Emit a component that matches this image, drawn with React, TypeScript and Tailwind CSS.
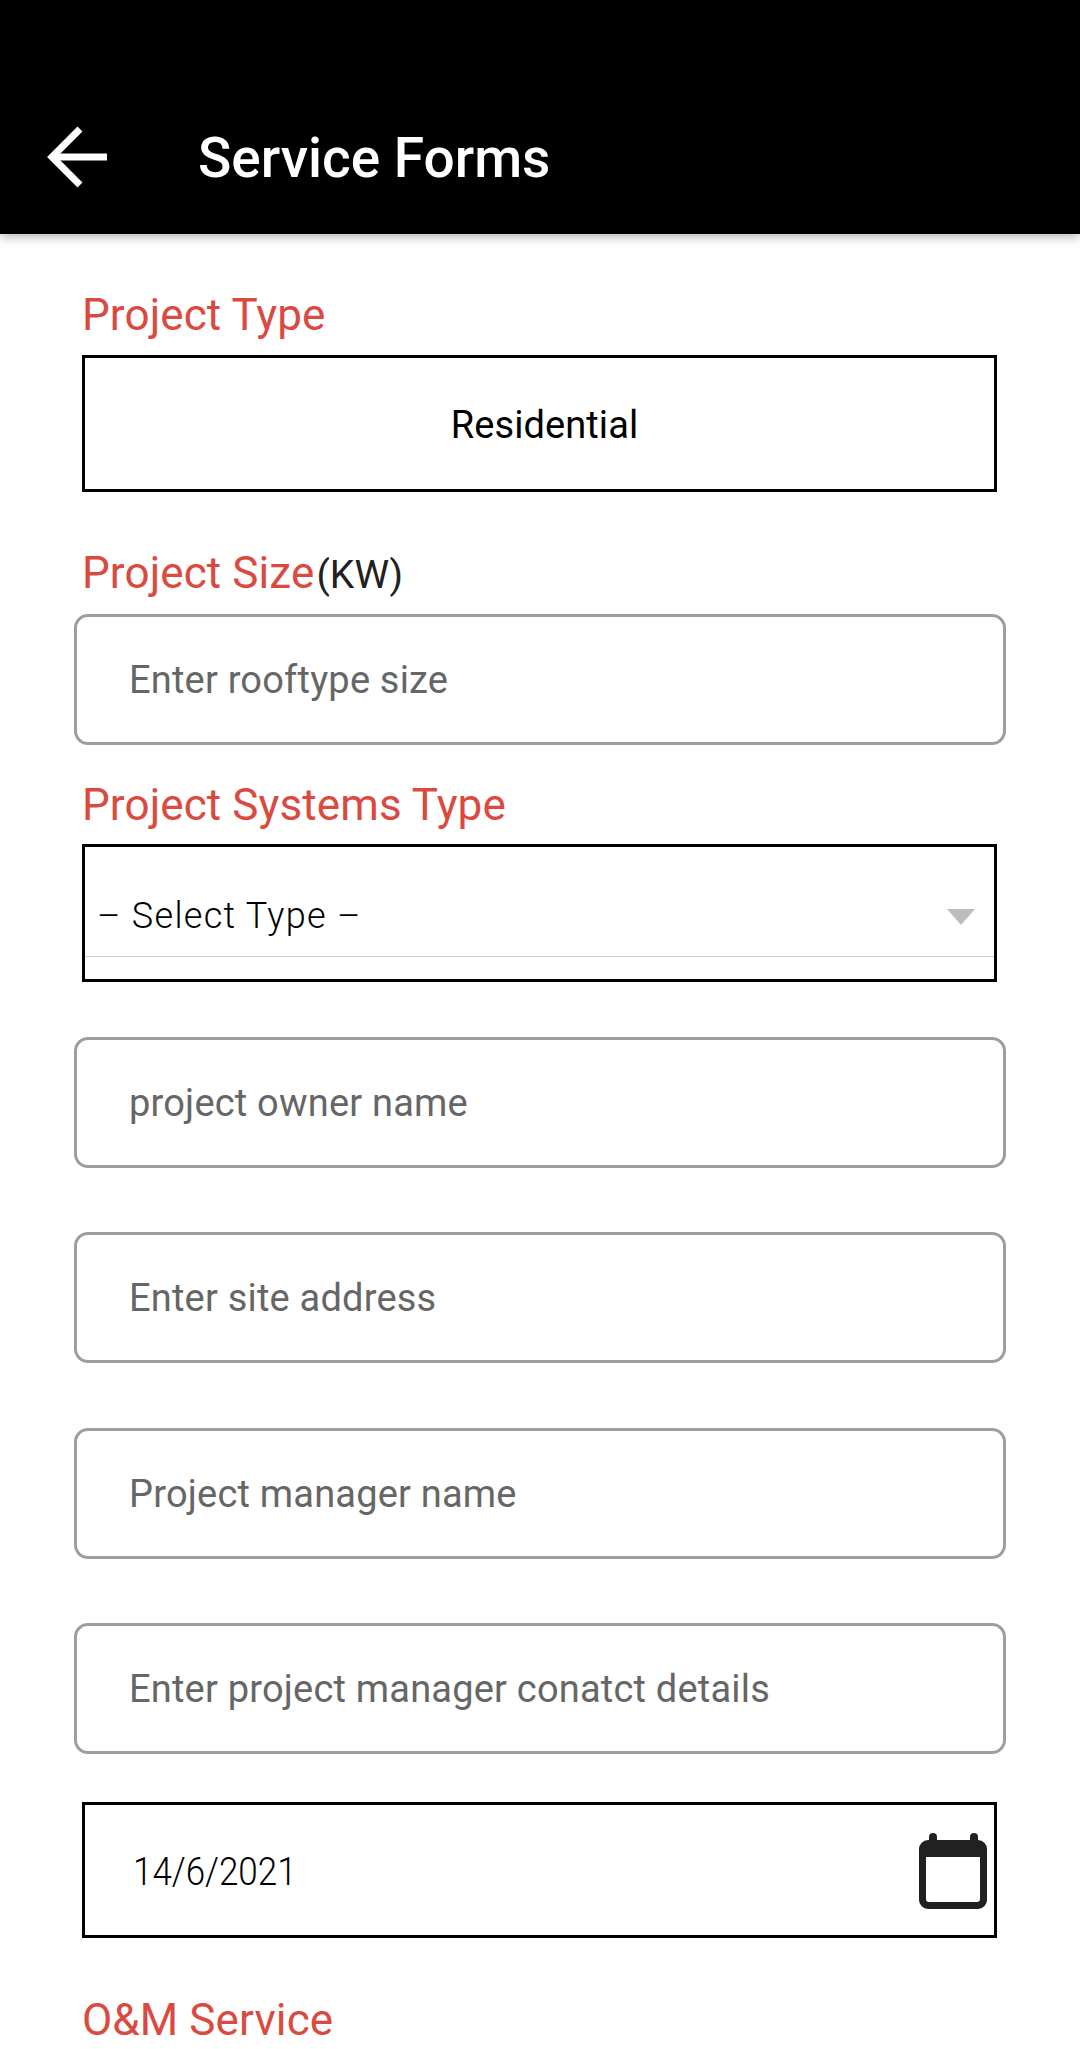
function BackArrow() {
  return (
    <svg width="62" height="62" viewBox="0 0 62 62" fill="none" stroke="#fff" strokeWidth="7">
      <path d="M60 31H6" />
      <path d="M33 3L5 31l28 28" />
    </svg>
  );
}

function CalendarIcon() {
  return (
    <svg width="68" height="76" viewBox="0 0 68 76" fill="#212121" className="translate-y-[1px]">
      <rect x="10" y="0" width="8" height="14" rx="4" />
      <rect x="51" y="0" width="8" height="14" rx="4" />
      <path
        fillRule="evenodd"
        d="M9 7h50a9 9 0 0 1 9 9v51a9 9 0 0 1-9 9H9a9 9 0 0 1-9-9V16a9 9 0 0 1 9-9zM7 24v42a3 3 0 0 0 3 3h48a3 3 0 0 0 3-3V24z"
      />
    </svg>
  );
}

function Label({ children, className }: { children: React.ReactNode; className: string }) {
  return (
    <div className={`ml-[8px] h-[50px] text-[44px] leading-[50px] tracking-[0.1px] text-[#da4a40] ${className}`}>
      {children}
    </div>
  );
}

function TextField({ placeholder, className }: { placeholder: string; className: string }) {
  return (
    <input
      readOnly
      placeholder={placeholder}
      className={`block h-[131px] w-[932px] rounded-[14px] border-[3px] border-[#9e9e9e] bg-white pl-[52px] pt-[1px] text-[38px] tracking-[0.2px] text-[#666] outline-none placeholder:text-[#666] ${className}`}
    />
  );
}

export default function App() {
  return (
    <div className="h-[2049px] w-[1080px] overflow-hidden bg-white font-['Roboto',sans-serif]">
      <header className="flex h-[234px] items-end bg-black pb-[46px] pl-[47px] shadow-[0_3px_10px_rgba(0,0,0,0.3)]">
        <BackArrow />
        <h1 className="ml-[89px] translate-y-[1px] text-[55px] font-medium leading-[62px] text-white">Service Forms</h1>
      </header>

      <main className="flex flex-col pl-[74px]">
        <Label className="mt-[56px]">Project Type</Label>
        <div className="ml-[8px] mt-[15px] flex h-[137px] w-[915px] items-center justify-center border-[3px] border-black pl-[10px] pt-[3px] text-[38px] tracking-[0.1px] text-black">
          Residential
        </div>

        <Label className="mt-[56px]">
          Project Size<span className="ml-[2px] text-[39px] font-[450] text-[#212121]">(KW)</span>
        </Label>
        <TextField placeholder="Enter rooftype size" className="mt-[16px]" />

        <Label className="mt-[35px]">Project Systems Type</Label>
        <div className="ml-[8px] mt-[14px] flex h-[138px] w-[915px] flex-col border-[3px] border-black">
          <div className="flex h-[110px] items-end justify-between border-b border-[#d0d0d0] pb-[19px] pl-[12px] pr-[19px]">
            <span className="text-[36px] font-light leading-[42px] tracking-[1.3px] text-black">– Select Type –</span>
            <svg width="28" height="16" viewBox="0 0 28 16" className="mb-[12px]">
              <path d="M0 0h28L14 16z" fill="#bdbdbd" />
            </svg>
          </div>
        </div>

        <TextField placeholder="project owner name" className="mt-[55px]" />
        <TextField placeholder="Enter site address" className="mt-[64px]" />
        <TextField placeholder="Project manager name" className="mt-[65px]" />
        <TextField placeholder="Enter project manager conatct details" className="mt-[64px]" />

        <div className="ml-[8px] mt-[48px] flex h-[136px] w-[915px] items-center justify-between border-[3px] border-black pl-[48px] pr-[7px]">
          <span className="origin-left translate-y-[2px] scale-x-[0.92] text-[38px] font-light text-black">14/6/2021</span>
          <CalendarIcon />
        </div>

        <Label className="mt-[57px]">O&amp;M Service</Label>
      </main>
    </div>
  );
}
